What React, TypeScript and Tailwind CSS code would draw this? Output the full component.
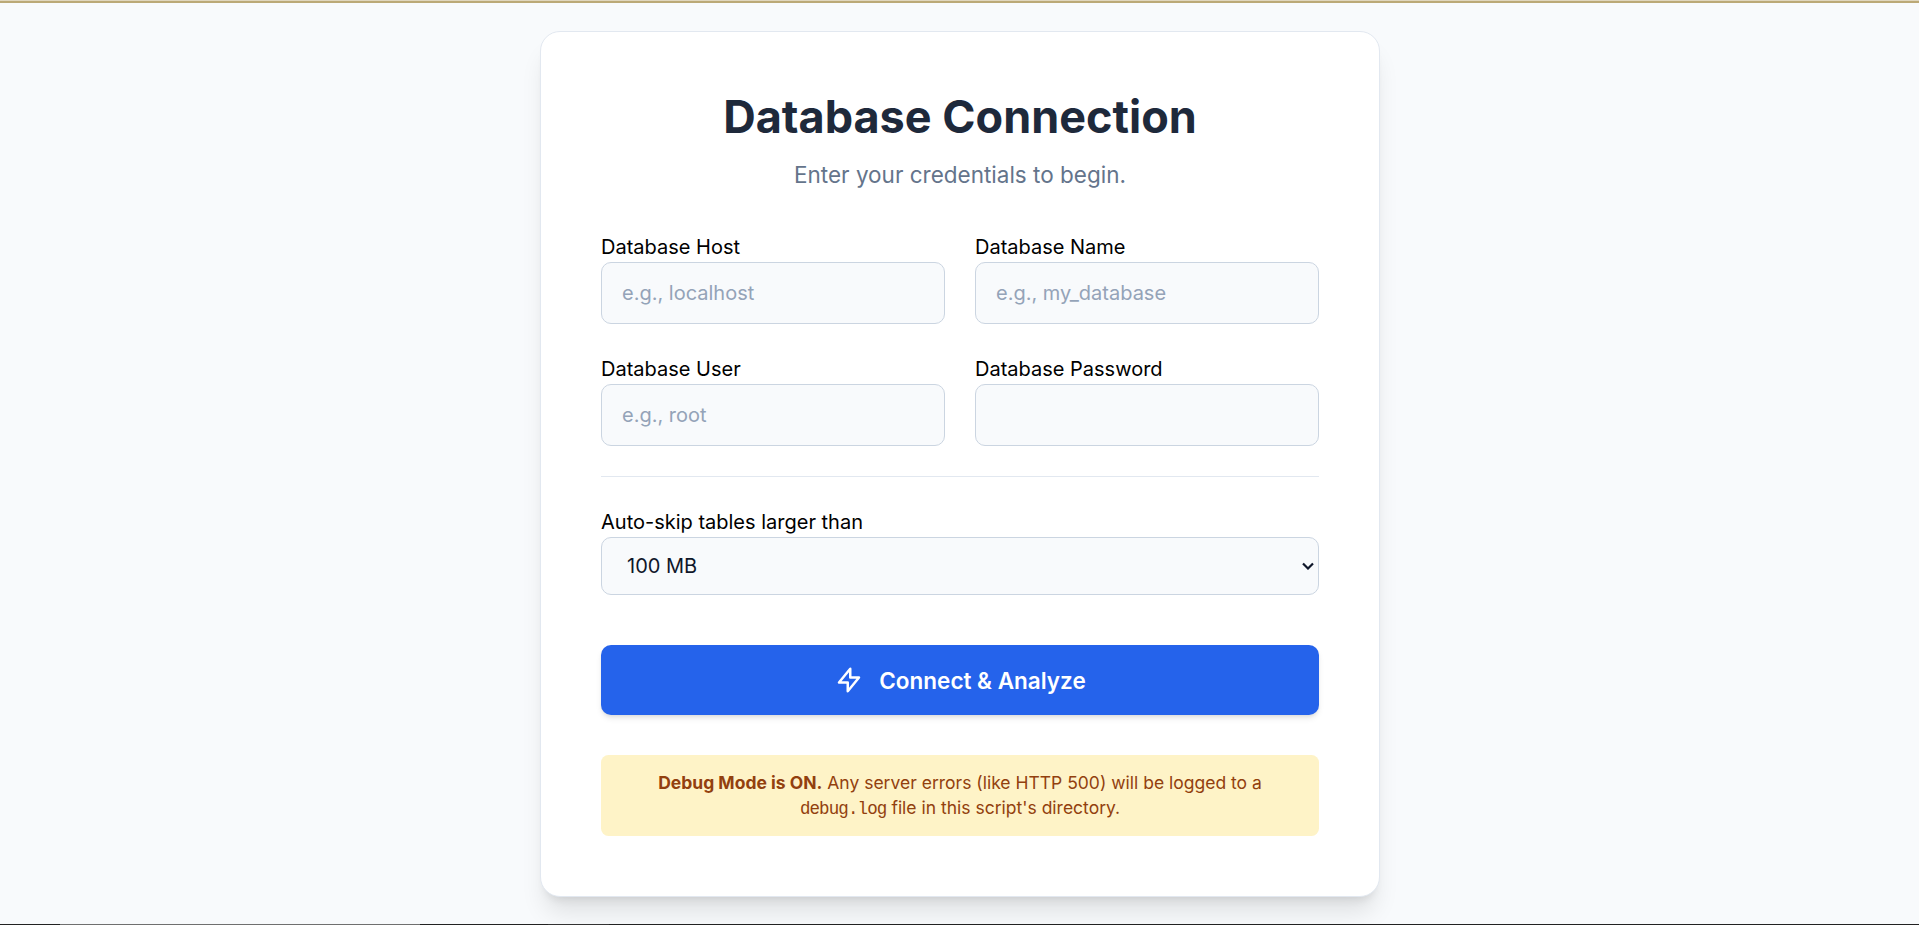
import React from "react";

const inputClass =
  "block h-[62px] w-full rounded-[10px] border border-[#cbd5e1] bg-[#f8fafc] px-5 text-[20px] text-[#0f172a] placeholder:text-[#94a3b8] outline-none";

function Field({ label, placeholder, type = "text" }: { label: string; placeholder?: string; type?: string }) {
  return (
    <div>
      <label className="block text-[20px] leading-[30px] text-black">{label}</label>
      <input type={type} placeholder={placeholder} className={inputClass} />
    </div>
  );
}

export default function App() {
  return (
    <div className="flex h-[925px] flex-col overflow-hidden bg-[#f8fafc] font-['Inter',sans-serif]">
      <div className="h-[3px] shrink-0 border-t border-[#e0d6bd] bg-[#bba977]" />
      <main className="mt-[28px] ml-[540px] h-[866px] w-[840px] shrink-0 rounded-[20px] border border-[#e2e8f0] bg-white px-[60px] pt-[60px] shadow-[0_20px_25px_-5px_rgba(0,0,0,0.1),0_8px_10px_-6px_rgba(0,0,0,0.1)]">
        <h1 className="text-center text-[45px] leading-[50px] font-bold text-[#1e293b]">Database Connection</h1>
        <p className="mt-[15px] text-center text-[22.5px] leading-[35px] text-[#64748b]">Enter your credentials to begin.</p>
        <div className="mt-[40px] grid grid-cols-2 gap-[30px]">
          <Field label="Database Host" placeholder="e.g., localhost" />
          <Field label="Database Name" placeholder="e.g., my_database" />
          <Field label="Database User" placeholder="e.g., root" />
          <Field label="Database Password" type="password" />
        </div>
        <div className="mt-[30px] border-t border-[#e2e8f0] pt-[30px]">
          <label className="block text-[20px] leading-[30px] text-black">Auto-skip tables larger than</label>
          <div className="grid">
            <select className="col-start-1 row-start-1 block h-[58px] w-full appearance-none rounded-[10px] border border-[#cbd5e1] bg-[#f8fafc] px-[25px] text-[20px] text-[#0f172a]">
              <option>100 MB</option>
            </select>
            <svg className="pointer-events-none col-start-1 row-start-1 mr-[5px] h-[8px] w-[12px] self-center justify-self-end" viewBox="0 0 12 8" fill="none" stroke="#0f172a" strokeWidth="2.2">
              <path d="M1 1.5l5 5 5-5" />
            </svg>
          </div>
        </div>
        <button className="mt-[50px] flex h-[70px] w-full items-center justify-center rounded-[10px] bg-[#2563eb] text-[22.5px] font-semibold text-white shadow-md">
          <svg className="mr-[15px] size-[30px]" viewBox="0 0 24 24" fill="none" stroke="currentColor" strokeWidth="2" strokeLinecap="round" strokeLinejoin="round">
            <path d="M13 10V3L4 14h7v7l9-11h-7z" />
          </svg>
          <span className="pt-px">Connect &amp; Analyze</span>
        </button>
        <div className="mt-[40px] h-[81px] rounded-[7.5px] bg-[#fef3c7] p-[15px] text-center text-[17.5px] leading-[25px] text-[#92400e]">
          <strong>Debug Mode is ON.</strong> Any server errors (like HTTP 500) will be logged to a <code className="font-['Liberation_Mono',monospace] text-[17.5px] tracking-[-0.88px]">debug.log</code> file in this script's directory.
        </div>
      </main>
      <div className="mt-auto flex h-px shrink-0 bg-[#222222]">
        <div className="ml-[60px] w-[360px] bg-[#6f6f6f]" />
        <div className="ml-[128px] w-[61px] bg-[#333333]" />
      </div>
    </div>
  );
}
